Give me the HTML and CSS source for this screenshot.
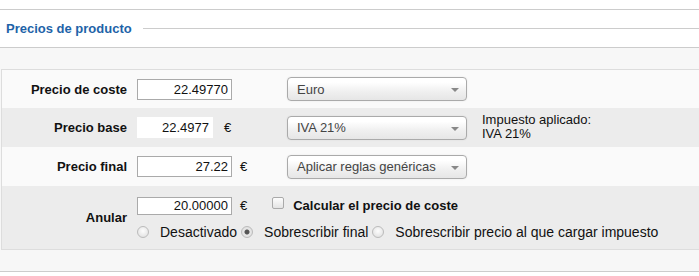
FILE: index.html
```html
<!DOCTYPE html>
<html lang="es">

<head>
    <meta charset="UTF-8">
    <meta name="viewport" content="width=device-width, initial-scale=1.0">
    <title>Precios de producto</title>
    <link rel="stylesheet" href="styles.css">
</head>

<body>
    <div class="panel">
        <div class="legend">
            <span class="legendTitle">Precios de producto</span>
            <span class="legendLine"></span>
        </div>

        <div class="panelBody">
            <div class="priceTable">

                <div class="row">
                    <label class="rowLabel" for="costPrice">Precio de coste</label>
                    <div class="field">
                        <input type="text" class="num" id="costPrice" value="22.49770">
                    </div>
                    <div class="select"><span>Euro</span><i class="arrow"></i></div>
                </div>

                <div class="row alt">
                    <label class="rowLabel" for="basePrice">Precio base</label>
                    <div class="field">
                        <input type="text" class="num plain" id="basePrice" value="22.4977">
                        <span class="euro wide">€</span>
                    </div>
                    <div class="select"><span>IVA 21%</span><i class="arrow"></i></div>
                    <div class="taxInfo">Impuesto aplicado:<br>IVA 21%</div>
                </div>

                <div class="row">
                    <label class="rowLabel" for="finalPrice">Precio final</label>
                    <div class="field">
                        <input type="text" class="num" id="finalPrice" value="27.22">
                        <span class="euro">€</span>
                    </div>
                    <div class="select"><span>Aplicar reglas genéricas</span><i class="arrow"></i></div>
                </div>

                <div class="row alt tall">
                    <label class="rowLabel" for="override">Anular</label>
                    <div class="overrideBox">
                        <div class="line">
                            <input type="text" class="num small" id="override" value="20.00000">
                            <span class="euro">€</span>
                            <input type="checkbox" class="check" id="calcCost">
                            <label class="checkLabel" for="calcCost">Calcular el precio de coste</label>
                        </div>
                        <div class="line radios">
                            <input type="radio" name="mode" id="m1" class="radio first">
                            <label for="m1">Desactivado</label>
                            <input type="radio" name="mode" id="m2" class="radio" checked>
                            <label for="m2">Sobrescribir final</label>
                            <input type="radio" name="mode" id="m3" class="radio">
                            <label for="m3">Sobrescribir precio al que cargar impuesto</label>
                        </div>
                    </div>
                </div>

            </div>
        </div>
    </div>
</body>

</html>
```

FILE: styles.css
```css
* {
    margin: 0;
    box-sizing: border-box;
}

body {
    background-color: white;
    color: #111;
    font-family: "Liberation Sans", Arial, sans-serif;
    font-size: 13px;
    overflow: hidden;
}

.panel {
    margin-top: 9px;
    border-top: 1px solid #ccc;
    border-bottom: 1px solid #ccc;
}

.legend {
    display: flex;
    align-items: center;
    height: 38px;
    padding: 0 0 1px 6px;
    border-bottom: 1px solid #ccc;
}

.legendTitle {
    color: #1e63a8;
    font-weight: bold;
    white-space: nowrap;
}

.legendLine {
    flex: 1;
    height: 1px;
    margin-left: 11px;
    background-color: #ccc;
}

.panelBody {
    background-color: #f7f7f7;
    padding: 21px 0 21px 1px;
    overflow: hidden;
}

.priceTable {
    width: 720px;
    border: 1px solid #ddd;
    border-right: none;
}

.row {
    display: flex;
    align-items: center;
    height: 38px;
    background-color: #fafafa;
}

.row + .row {
    height: 39px;
}

.row.alt {
    background-color: #ececec;
}

.row.tall {
    height: 63px;
}

.rowLabel {
    width: 135px;
    padding-right: 10px;
    text-align: right;
    font-weight: bold;
    color: #111;
}

.field {
    width: 150px;
    display: flex;
    align-items: center;
}

input.num {
    width: 95px;
    height: 21px;
    padding: 0 3px 0 0;
    border: 1px solid #aaa;
    background-color: white;
    font-family: inherit;
    font-size: 13px;
    color: #111;
    text-align: right;
    outline: none;
}

input.num.plain {
    width: 76px;
    border-color: white;
}

input.num.small {
    height: 18px;
}

.euro {
    margin-left: 8px;
}

.euro.wide {
    margin-left: 11px;
}

.select {
    width: 180px;
    height: 24px;
    display: flex;
    align-items: center;
    justify-content: space-between;
    padding: 0 7px 0 9px;
    border: 1px solid #aaa;
    border-radius: 4px;
    background: linear-gradient(#fff 20%, #f0f0f0 60%, #e6e6e6);
    color: #444;
    box-shadow: 0 0 2px rgba(0, 0, 0, 0.08);
}

.arrow {
    width: 0;
    height: 0;
    border-left: 4px solid transparent;
    border-right: 4px solid transparent;
    border-top: 4px solid #888;
    margin-top: 2px;
}

.taxInfo {
    margin-left: 15px;
    line-height: 14px;
    color: #111;
    padding-bottom: 2px;
}

.overrideBox {
    display: flex;
    flex-direction: column;
    gap: 9px;
    padding-top: 1px;
}

.line {
    display: flex;
    align-items: center;
}

.check {
    appearance: none;
    width: 12px;
    height: 12px;
    margin: -6px 9px 0 25px;
    border: 1px solid #aaa;
    border-radius: 2px;
    background: linear-gradient(#fdfdfd, #e4e4e4);
}

.checkLabel {
    font-weight: bold;
}

.radio {
    appearance: none;
    width: 12px;
    height: 12px;
    margin: 0 11px 0 4px;
    border: 1px solid #bbb;
    border-radius: 50%;
    background: radial-gradient(circle at 50% 40%, #fdfdfd, #dcdcdc);
}

.radio.first {
    margin-left: 0;
}

.radio:checked {
    background: radial-gradient(circle, #555 0 2px, #e8e8e8 3px, #d8d8d8);
}

.radios label {
    font-size: 14px;
    color: #111;
}
```
